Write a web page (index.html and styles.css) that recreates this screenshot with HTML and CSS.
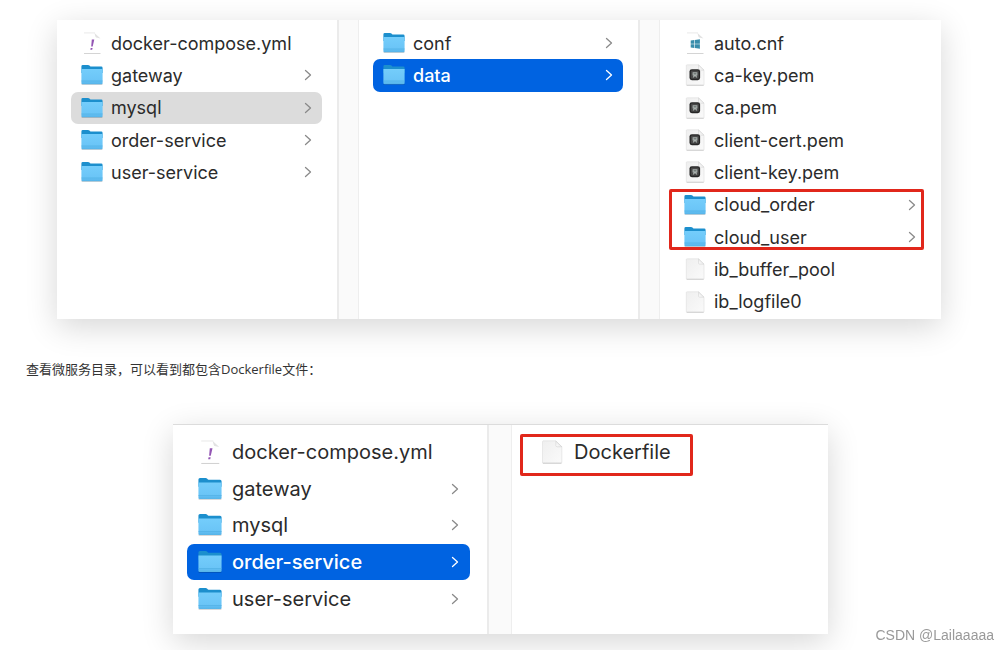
FILE: index.html
```html
<!DOCTYPE html>
<html lang="zh-CN">
<head>
<meta charset="utf-8">
<meta name="viewport" content="width=device-width, initial-scale=1">
<title>Dockerfile</title>
<link rel="stylesheet" href="styles.css">
</head>
<body>
<svg class="defs" aria-hidden="true">
  <defs>
    <linearGradient id="folder-front" x1="0" y1="0" x2="0" y2="1">
      <stop offset="0" stop-color="#74cdfb"/><stop offset="0.72" stop-color="#6bc5f7"/><stop offset="1" stop-color="#55b3e8"/>
    </linearGradient>
    <linearGradient id="paper" x1="0" y1="0" x2="1" y2="1">
      <stop offset="0" stop-color="#efefef"/><stop offset="1" stop-color="#fafafa"/>
    </linearGradient>
    <linearGradient id="fold" x1="0" y1="1" x2="1" y2="0">
      <stop offset="0" stop-color="#ffffff"/><stop offset="1" stop-color="#dcdcdc"/>
    </linearGradient>
    <symbol id="folder" viewBox="0 0 22 22">
      <path d="M0.6 19.6h20.8v1.2H0.6z" fill="#000" opacity="0.22"/>
      <path d="M0.4 2.4Q0.4 1 1.8 1H7q.9 0 1.5.6l.6.6q.5.4 1.2.4H20.200q1.400 0 1.400 1.400V9H.4z" fill="#1c8fcd"/>
      <path d="M.4 5.100h21.200V19q0 1.200-1.200 1.200H1.600Q.4 20.200.4 19z" fill="url(#folder-front)"/>
      <path d="M.4 17h21.200" stroke="#4faee2" stroke-width=".6"/>
    </symbol>
    <symbol id="file" viewBox="0 0 22 22">
      <path d="M2.300 1.500q0-.7.8-.7H14.500L20 6.200V20.300q0 .9-.8.9H3.100q-.8 0-.8-.9z" fill="url(#paper)" stroke="#dedede" stroke-width=".6"/>
      <path d="M2.600 21.300h17.100" stroke="#c4c4c4" stroke-width=".7"/>
      <path d="M14.500.9V5q0 1.200 1.200 1.200H20z" fill="url(#fold)" stroke="#cfcfcf" stroke-width=".5"/>
    </symbol>
    <symbol id="yml" viewBox="0 0 22 22">
      <path d="M3 .9h11l5.500 5.300v14.900H3z" fill="#fff"/>
      <path d="M3 .9h11" stroke="#e4e4e4" stroke-width=".8"/>
      <path d="M3 21.500h16.500" stroke="#cfcfcf" stroke-width=".9"/>
      <path d="M13.500 .9q1 4.600 1.600 4.700l4.400.8z" fill="#e2e2e2"/>
      <path d="M10.800 7.500h2.500l-1.600 7h-1.500zM9.700 15.900h1.900l-.4 1.800H9.300z" fill="#9355b4"/>
    </symbol>
    <symbol id="cnf" viewBox="0 0 22 22">
      <path d="M3 .9h11l5.500 5.300v14.900H3z" fill="#fff"/>
      <path d="M3 .9h11" stroke="#e4e4e4" stroke-width=".8"/>
      <path d="M3 21.500h16.500" stroke="#cfcfcf" stroke-width=".9"/>
      <path d="M13.500 .9q1 4.600 1.600 4.700l4.400.8z" fill="#e2e2e2"/>
      <path d="M6.700 8.600l3.600-.5v3.600H6.700zM10.900 8l5-.7v4.400h-5zM6.700 12.300h3.600v3.600l-3.600-.5zM10.900 12.300h5v4.400l-5-.7z" fill="#3a8dab"/>
    </symbol>
    <symbol id="pem" viewBox="0 0 22 22">
      <use href="#file"/>
      <rect x="5.500" y="5.200" width="10.600" height="11" rx="2.400" fill="#262626"/>
      <rect x="6.800" y="6.400" width="8" height="8.400" rx="1.400" fill="#484848"/>
      <path d="M8.600 8.300h4.800v3.200h-1l.8 1.900h-1l-1.200-1.300-1.200 1.300h-1l.8-1.900h-1z" fill="#a9b0ad"/>
      <path d="M9.600 9.300h2.800v1H9.600z" fill="#5d6764"/>
    </symbol>
    <symbol id="chevron" viewBox="0 0 8 12">
      <path d="M1.500 1.500L6.500 6l-5 4.500" fill="none" stroke="currentColor" stroke-width="1.300" stroke-linecap="round" stroke-linejoin="round"/>
    </symbol>
  </defs>
</svg>

<main class="article">
  <section class="finder finder-wide">
    <div class="column" role="list">
      <div class="row" role="listitem"><svg class="icon"><use href="#yml"/></svg><span class="name">docker-compose.yml</span></div>
      <div class="row" role="listitem"><svg class="icon"><use href="#folder"/></svg><span class="name">gateway</span><svg class="chevron"><use href="#chevron"/></svg></div>
      <div class="row open" role="listitem"><svg class="icon"><use href="#folder"/></svg><span class="name">mysql</span><svg class="chevron"><use href="#chevron"/></svg></div>
      <div class="row" role="listitem"><svg class="icon"><use href="#folder"/></svg><span class="name">order-service</span><svg class="chevron"><use href="#chevron"/></svg></div>
      <div class="row" role="listitem"><svg class="icon"><use href="#folder"/></svg><span class="name">user-service</span><svg class="chevron"><use href="#chevron"/></svg></div>
    </div>
    <div class="gutter"></div>
    <div class="column" role="list">
      <div class="row" role="listitem"><svg class="icon"><use href="#folder"/></svg><span class="name">conf</span><svg class="chevron"><use href="#chevron"/></svg></div>
      <div class="row selected" role="listitem"><svg class="icon"><use href="#folder"/></svg><span class="name">data</span><svg class="chevron"><use href="#chevron"/></svg></div>
    </div>
    <div class="gutter"></div>
    <div class="column" role="list">
      <div class="row" role="listitem"><svg class="icon"><use href="#cnf"/></svg><span class="name">auto.cnf</span></div>
      <div class="row" role="listitem"><svg class="icon"><use href="#pem"/></svg><span class="name">ca-key.pem</span></div>
      <div class="row" role="listitem"><svg class="icon"><use href="#pem"/></svg><span class="name">ca.pem</span></div>
      <div class="row" role="listitem"><svg class="icon"><use href="#pem"/></svg><span class="name">client-cert.pem</span></div>
      <div class="row" role="listitem"><svg class="icon"><use href="#pem"/></svg><span class="name">client-key.pem</span></div>
      <div class="row" role="listitem"><svg class="icon"><use href="#folder"/></svg><span class="name">cloud_order</span><svg class="chevron"><use href="#chevron"/></svg></div>
      <div class="row" role="listitem"><svg class="icon"><use href="#folder"/></svg><span class="name">cloud_user</span><svg class="chevron"><use href="#chevron"/></svg></div>
      <div class="row" role="listitem"><svg class="icon"><use href="#file"/></svg><span class="name">ib_buffer_pool</span></div>
      <div class="row" role="listitem"><svg class="icon"><use href="#file"/></svg><span class="name">ib_logfile0</span></div>
      <div class="marker marker-databases" aria-hidden="true"></div>
    </div>
  </section>

  <p class="caption">查看微服务目录，可以看到都包含Dockerfile文件：</p>

  <section class="finder finder-narrow">
    <div class="column" role="list">
      <div class="row" role="listitem"><svg class="icon"><use href="#yml"/></svg><span class="name">docker-compose.yml</span></div>
      <div class="row" role="listitem"><svg class="icon"><use href="#folder"/></svg><span class="name">gateway</span><svg class="chevron"><use href="#chevron"/></svg></div>
      <div class="row" role="listitem"><svg class="icon"><use href="#folder"/></svg><span class="name">mysql</span><svg class="chevron"><use href="#chevron"/></svg></div>
      <div class="row selected" role="listitem"><svg class="icon"><use href="#folder"/></svg><span class="name">order-service</span><svg class="chevron"><use href="#chevron"/></svg></div>
      <div class="row" role="listitem"><svg class="icon"><use href="#folder"/></svg><span class="name">user-service</span><svg class="chevron"><use href="#chevron"/></svg></div>
    </div>
    <div class="gutter"></div>
    <div class="column column-files" role="list">
      <div class="row" role="listitem"><svg class="icon"><use href="#file"/></svg><span class="name">Dockerfile</span></div>
      <div class="marker marker-dockerfile" aria-hidden="true"></div>
    </div>
  </section>
</main>
<div class="watermark">CSDN @Lailaaaaa</div>
</body>
</html>
```
FILE: styles.css
```css
* {
  box-sizing: border-box;
}

body {
  margin: 0;
  background: #fff;
  color: #2b2b2b;
  font-family: Inter, "Liberation Sans", sans-serif;
}

.defs {
  position: absolute;
  width: 0;
  height: 0;
}

.article {
  padding: 20px 0 16px;
}

.finder {
  display: grid;
  background: #fff;
  box-shadow: 0 8px 30px rgba(0, 0, 0, 0.16);
}

.finder-wide {
  grid-template-columns: 280fr 22px 279fr 22px 281fr;
  min-height: 299px;
  margin: 0 67px 0 57px;
  font-size: 18px;
}

.finder-narrow {
  grid-template-columns: 314fr 25px 316fr;
  width: 65%;
  min-height: 210px;
  margin: 0 auto 0 173px;
  border-top: 1px solid #dcdcdc;
  font-size: 20px;
}

.column {
  display: grid;
  grid-template-columns: minmax(0, 1fr);
  grid-template-rows: repeat(9, minmax(32px, 1fr));
  padding: 7px 15px 1px 14px;
}

.finder-narrow .column {
  grid-template-rows: repeat(5, minmax(36px, 1fr));
  padding: 9px 17px 17px 14px;
}

.finder-narrow .column-files {
  padding-left: 17px;
}

.gutter {
  background: #fafafa;
  border-left: 2px solid #ebebeb;
  border-right: 1px solid #eee;
}

.row {
  grid-column: 1;
  display: flex;
  align-items: center;
  gap: 8px;
  padding: 0 10px;
  border-radius: 7px;
}

.finder-narrow .row {
  gap: 10px;
  padding: 0 11px;
}

.icon {
  flex: none;
  width: 22px;
  height: 22px;
}

.finder-narrow .icon {
  width: 24px;
  height: 24px;
}

.name {
  flex: 1;
  white-space: nowrap;
}

.chevron {
  flex: none;
  width: 8px;
  height: 12px;
  color: #8a8a8a;
}

.open {
  background: #dcdcdc;
}

.selected {
  background: #0063e1;
  color: #fff;
  font-weight: 500;
}

.selected .chevron {
  color: #fff;
}

.marker {
  grid-column: 1;
  border: 3px solid #e1271b;
  border-radius: 2px;
  pointer-events: none;
}

.marker-databases {
  grid-row: 6 / 8;
  margin: 0 2px 3px -5px;
}

.marker-dockerfile {
  grid-row: 1;
  width: 173px;
  margin: 0 0 -5px -9px;
}

.column .row:nth-child(1) { grid-row: 1; }
.column .row:nth-child(2) { grid-row: 2; }
.column .row:nth-child(3) { grid-row: 3; }
.column .row:nth-child(4) { grid-row: 4; }
.column .row:nth-child(5) { grid-row: 5; }
.column .row:nth-child(6) { grid-row: 6; }
.column .row:nth-child(7) { grid-row: 7; }
.column .row:nth-child(8) { grid-row: 8; }
.column .row:nth-child(9) { grid-row: 9; }

.caption {
  margin: 40px 26px 45px;
  color: #333;
  font-family: "Open Sans", "Noto Sans CJK SC", sans-serif;
  font-size: 13px;
  line-height: 20px;
}

.watermark {
  position: fixed;
  right: 14px;
  bottom: 5px;
  color: #999;
  font-family: "Liberation Sans", sans-serif;
  font-size: 14px;
  line-height: 20px;
}
```
